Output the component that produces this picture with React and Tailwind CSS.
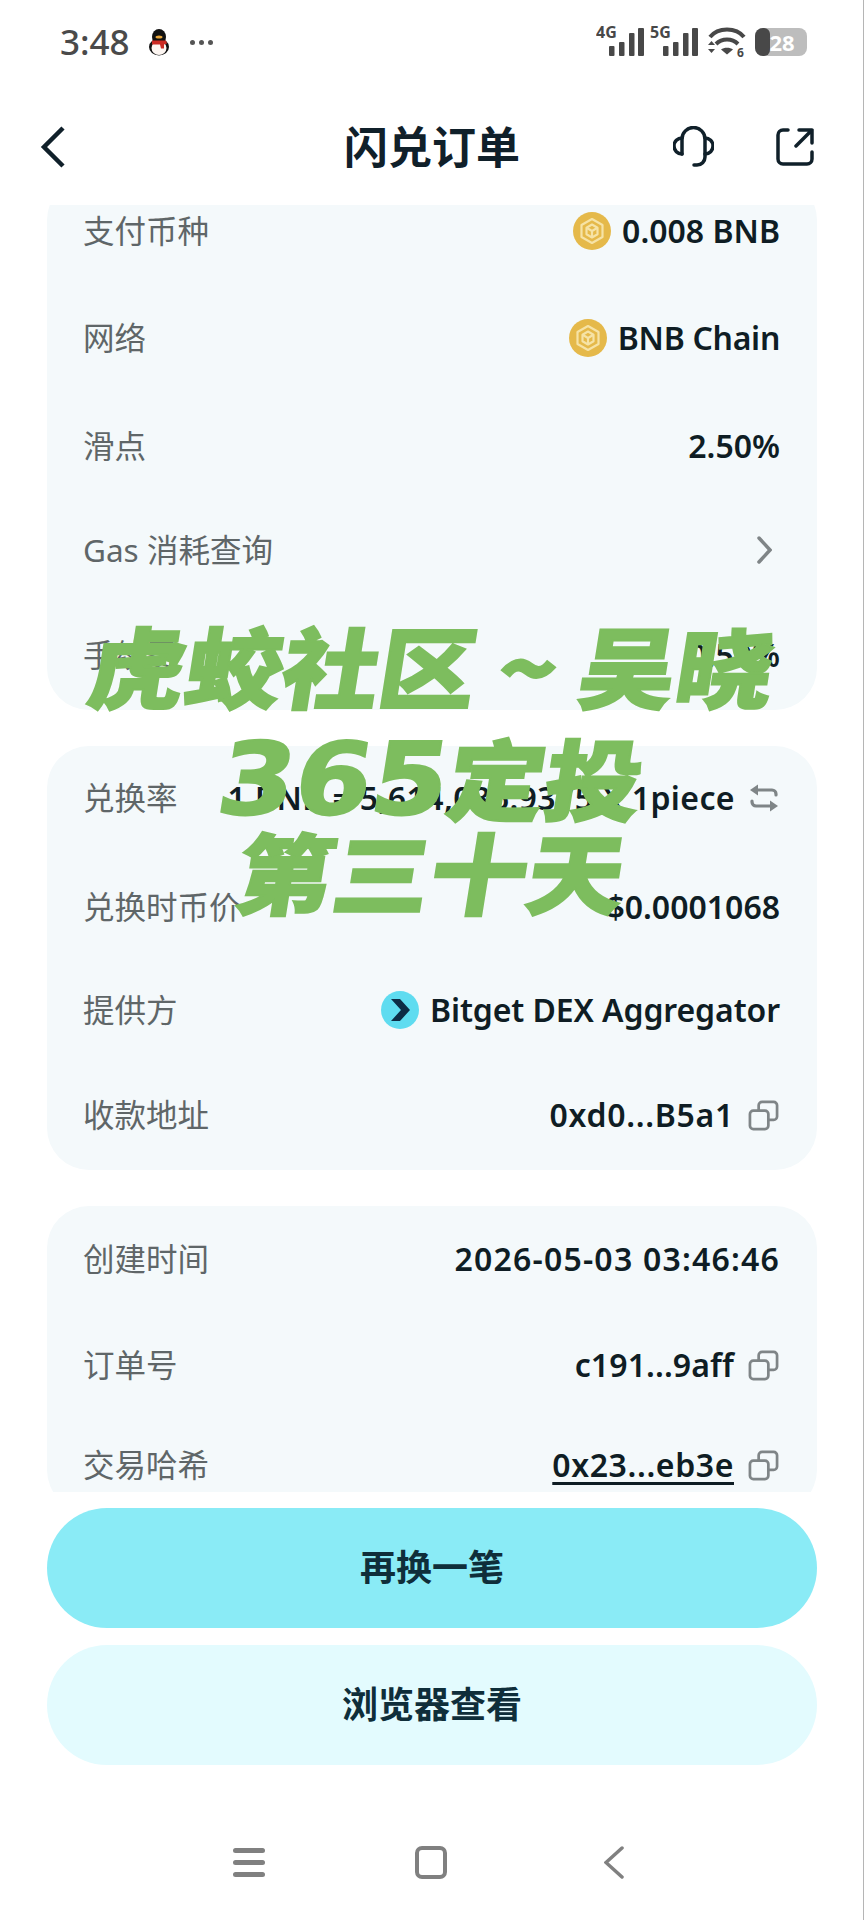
import React from "react";

const CJK = "font-['Noto_Sans','Noto_Sans_CJK_SC',sans-serif]";
const MARK = "text-[88px] font-black whitespace-nowrap [-webkit-text-stroke:2px_#7dbd5e] [transform:skewX(-9deg)_scaleX(1.1)]";

const BnbIcon = () => (
  <svg width="38" height="38" viewBox="0 0 38 38" className="shrink-0">
    <circle cx="19" cy="19" r="19" fill="#e5b94a" />
    <g fill="none" stroke="#f6e3a6" strokeWidth="2.200" strokeLinejoin="round">
      <path d="M19 7l10.500 6v12L19 31 8.500 25V13z" />
      <path d="M19 12.500l5.500 3.200v6.600L19 25.500l-5.500-3.200v-6.600z" />
      <path d="M13.500 15.700L19 19l5.500-3.300M19 19v6.500" />
    </g>
  </svg>
);

const BitgetIcon = () => (
  <svg width="38" height="38" viewBox="0 0 38 38" className="shrink-0">
    <circle cx="19" cy="19" r="19" fill="#5fdcf0" />
    <path d="M10 8h9l10 11-10 11h-9l10-11z" fill="#0d2c45" />
  </svg>
);

const CopyIcon = () => (
  <svg width="31" height="31" viewBox="0 0 32 32" fill="none" stroke="#7f8587" strokeWidth="2.800" className="ml-[3px] mr-[1px] shrink-0">
    <rect x="2" y="11" width="19" height="19" rx="3.500" />
    <path d="M11 11V5.500A3.500 3.500 0 0 1 14.500 2H26.500A3.500 3.500 0 0 1 30 5.500V17A3.500 3.500 0 0 1 26.500 20.500H21" />
  </svg>
);

const SwapIcon = () => (
  <svg width="30" height="30" viewBox="0 0 30 30" fill="none" stroke="#7f8587" strokeWidth="3.200" strokeLinecap="round" className="ml-[3px] mr-[1px] shrink-0">
    <path d="M8 7h15a4 4 0 0 1 4 4v1" />
    <path d="M1 7l8-5.500v11z" fill="#7f8587" stroke="none" />
    <path d="M3 18v1a4 4 0 0 0 4 4h15" />
    <path d="M29 23l-8-5.500v11z" fill="#7f8587" stroke="none" />
  </svg>
);

const Signal = ({ label }) => (
  <svg width="50" height="42" viewBox="0 0 50 42" fill="#484848">
    <text x="0" y="17" fontSize="16" fontWeight="700" fontFamily="Noto Sans">{label}</text>
    <rect x="13" y="25" width="5.500" height="10" rx="1" />
    <rect x="23" y="21" width="5.500" height="14" rx="1" />
    <rect x="33" y="12" width="5.500" height="23" rx="1" />
    <rect x="42" y="7" width="6" height="28" rx="1" />
  </svg>
);

const Row = ({ label, h, children }) => (
  <div className={`flex items-center justify-between pl-[36px] pr-[37px] ${h}`}>
    <span className="text-[31.500px] text-[#5f6668] whitespace-nowrap">{label}</span>
    <div className="flex items-center gap-[11px] text-[32px] font-semibold text-[#0f1d24] whitespace-nowrap">{children}</div>
  </div>
);

const Card = ({ children }) => (
  <div className="rounded-[42px] bg-[#f4f9fb]">{children}</div>
);

export default function App() {
  return (
    <div className={`relative flex h-[1920px] w-[864px] flex-col overflow-hidden bg-white ${CJK}`}>
      {/* status bar */}
      <div className="flex h-[84px] items-center justify-between pl-[60px] pr-[57px]">
        <div className="flex items-center">
          <span className="text-[35px] font-medium text-[#4a4a4a]">3:48</span>
          <svg width="24" height="27" viewBox="0 0 24 27" className="ml-[17px]">
            <ellipse cx="12" cy="8" rx="7" ry="8" fill="#111" />
            <ellipse cx="12" cy="18" rx="10" ry="8.500" fill="#111" />
            <ellipse cx="12" cy="19" rx="7.500" ry="7" fill="#fdf6f2" />
            <path d="M5 11.500h14l1 3-3 1v4h-3l-1-4H5z" fill="#cc2b24" />
            <ellipse cx="12" cy="8" rx="3.500" ry="1.600" fill="#e9a63a" />
          </svg>
          <div className="ml-[19px] flex gap-[4px]">
            <div className="h-[5px] w-[5px] rounded-full bg-[#555555]" />
            <div className="h-[5px] w-[5px] rounded-full bg-[#555555]" />
            <div className="h-[5px] w-[5px] rounded-full bg-[#555555]" />
          </div>
        </div>
        <div className="flex items-center">
          <Signal label="4G" />
          <div className="ml-[4px]">
            <Signal label="5G" />
          </div>
          <svg width="38" height="42" viewBox="0 0 38 42" fill="none" stroke="#484848" strokeWidth="4" className="ml-[8px]">
            <path d="M2 16C10 6 28 6 36 16" />
            <path d="M8 23c6-6 16-6 22 0" />
            <path d="M13 28.500l6 5 6-5c-3-2.500-9-2.500-12 0z" fill="#484848" stroke="none" />
            <path d="M0 24l3.500-4 3.500 4zM0 28l3.500 4 3.500-4z" fill="#484848" stroke="none" />
            <text x="29" y="36" fontSize="12" fontWeight="700" fontFamily="Noto Sans" fill="#484848" stroke="none">6</text>
          </svg>
          <div className="relative ml-[9px] flex h-[28px] w-[52px] items-center justify-center overflow-hidden rounded-[8px] bg-[#bdbdbd]">
            <div className="absolute inset-y-0 left-0 w-[15px] rounded-r-[6px] bg-[#484848]" />
            <span className="relative pl-[2px] text-[22px] font-bold leading-[28px] text-white">28</span>
          </div>
        </div>
      </div>

      {/* header */}
      <div className="grid h-[121px] grid-cols-[1fr_auto_1fr] items-center pl-[50px] pr-[50px] pt-[4px]">
        <svg width="26" height="42" viewBox="0 0 26 42" fill="none" stroke="#10202a" strokeWidth="4.500" className="-ml-[10px]">
          <path d="M23 2L4 21l19 19" />
        </svg>
        <span className="text-[44px] font-semibold text-[#10202a]">闪兑订单</span>
        <div className="flex items-center justify-end gap-[62px]">
          <svg width="41" height="41" viewBox="0 0 41 41" fill="none" stroke="#10202a" strokeWidth="3.500" strokeLinecap="round">
            <path d="M9 28V13a11.500 11.500 0 0 1 23 0v18a8 8 0 0 1-8 8h-3" />
            <path d="M9 12a8 8 0 0 0 0 16" />
            <path d="M32 12a8 8 0 0 1 0 16" />
          </svg>
          <svg width="38" height="38" viewBox="0 0 38 38" fill="none" stroke="#10202a" strokeWidth="3.500" strokeLinecap="round" strokeLinejoin="round">
            <path d="M12 2H7a5 5 0 0 0-5 5v24a5 5 0 0 0 5 5h24a5 5 0 0 0 5-5v-7" />
            <path d="M20 18L36 2M23 2h13v13" />
          </svg>
        </div>
      </div>

      {/* scrolled content */}
      <div className="h-[1287px] overflow-hidden px-[47px]">
        <div className="-mt-[27px] flex flex-col gap-[36px]">
          <Card>
            <Row label="支付币种" h="h-[106px]">
              <BnbIcon />
              <span>0.008 BNB</span>
            </Row>
            <Row label="网络" h="h-[108px]">
              <BnbIcon />
              <span className="tracking-[-0.300px]">BNB Chain</span>
            </Row>
            <Row label="滑点" h="h-[108px]">
              <span>2.50%</span>
            </Row>
            <Row label="Gas 消耗查询" h="h-[100px]">
              <svg width="15" height="28" viewBox="0 0 15 28" fill="none" stroke="#7f8587" strokeWidth="3.500" strokeLinecap="round" className="mr-[8px]">
                <path d="M2 2l11 12L2 26" />
              </svg>
            </Row>
            <Row label="手续费" h="h-[110px]">
              <span>0.50%</span>
            </Row>
          </Card>
          <Card>
            <Row label="兑换率" h="h-[104px]">
              <span className="tracking-[0.400px]">1 BNB = 5,614,086.9375 X 1piece</span>
              <SwapIcon />
            </Row>
            <Row label="兑换时币价" h="h-[114px]">
              <span>$0.0001068</span>
            </Row>
            <Row label="提供方" h="h-[92px]">
              <BitgetIcon />
              <span className="tracking-[-0.100px]">Bitget DEX Aggregator</span>
            </Row>
            <Row label="收款地址" h="h-[114px] pt-[4px]">
              <span className="tracking-[0.700px]">0xd0...B5a1</span>
              <CopyIcon />
            </Row>
          </Card>
          <Card>
            <Row label="创建时间" h="h-[106px]">
              <span className="tracking-[1.200px]">2026-05-03 03:46:46</span>
            </Row>
            <Row label="订单号" h="h-[106px]">
              <span className="tracking-[0.100px]">c191...9aff</span>
              <CopyIcon />
            </Row>
            <Row label="交易哈希" h="h-[94px]">
              <span className="tracking-[0.600px] underline underline-offset-[5px]">0x23...eb3e</span>
              <CopyIcon />
            </Row>
          </Card>
        </div>
      </div>

      {/* actions */}
      <div className="mt-[16px] flex flex-col gap-[17px] px-[47px]">
        <button className="flex h-[120px] items-center justify-center rounded-full bg-[#8aebf6] text-[36px] font-semibold text-[#0f2e3a]">再换一笔</button>
        <button className="flex h-[120px] items-center justify-center rounded-full bg-[#e3fbfe] text-[36px] font-semibold text-[#0f2e3a]">浏览器查看</button>
      </div>

      {/* nav bar */}
      <div className="mt-[81px] flex items-center pl-[233px]">
        <div className="flex w-[32px] flex-col gap-[7px]">
          <div className="h-[5px] rounded-full bg-[#808080]" />
          <div className="h-[5px] rounded-full bg-[#808080]" />
          <div className="h-[5px] rounded-full bg-[#808080]" />
        </div>
        <div className="ml-[150px] h-[33px] w-[32px] rounded-[7px] border-[4px] border-[#808080]" />
        <svg width="20" height="33" viewBox="0 0 20 33" fill="none" stroke="#808080" strokeWidth="3.500" strokeLinecap="round" className="ml-[157px]">
          <path d="M18 2L2 16.500 18 31" />
        </svg>
      </div>

      {/* watermark over the page */}
      <div className="pointer-events-none absolute inset-x-0 top-[611px] flex flex-col items-center font-['Noto_Sans_CJK_SC',sans-serif] text-[#7dbd5e]">
        <span className={`${MARK} h-[112px] leading-[105px]`}>虎蛟社区 ~ 吴晓</span>
        <span className={`${MARK} h-[94px] leading-[105px]`}>
          <span className="font-['DejaVu_Sans'] text-[100px] font-bold">365</span>定投
        </span>
        <span className={`${MARK} h-[105px] leading-[105px]`}>第三十天</span>
      </div>

      {/* edge of the capture */}
      <div className="absolute inset-y-0 right-0 w-[1px] bg-[#b5b5b5]" />
    </div>
  );
}
